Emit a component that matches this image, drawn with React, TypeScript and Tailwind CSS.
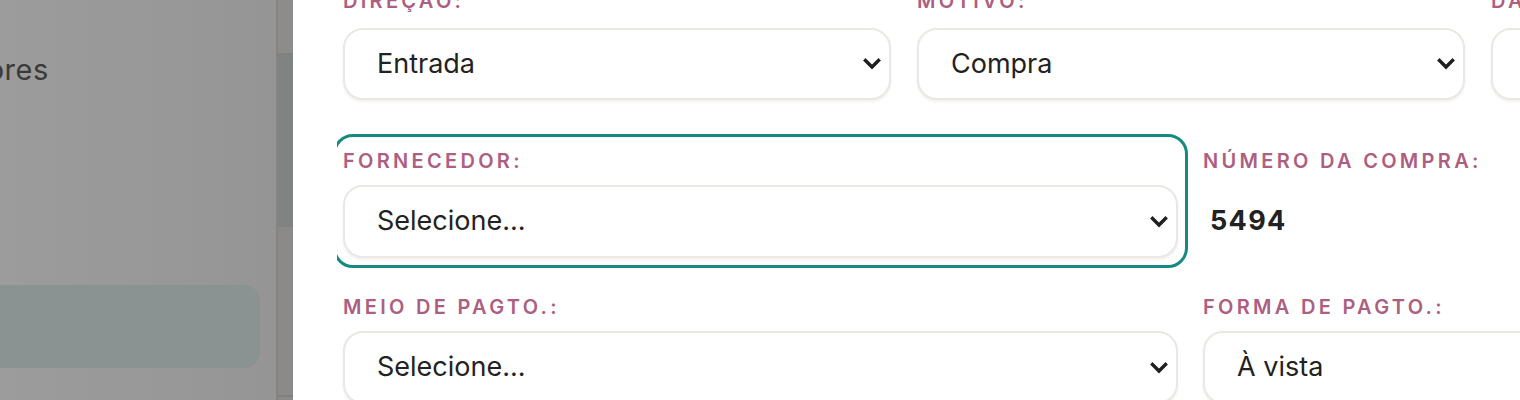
import React from "react";

const font = { fontFamily: "Inter, 'Noto Sans', sans-serif" };

function Chevron() {
  return (
    <svg width="18" height="12" viewBox="0 0 18 12" className="shrink-0">
      <path d="M2.5 2.5 L9 9 L15.5 2.5" fill="none" stroke="#1f1f1f" strokeWidth="3.4" strokeLinecap="square" />
    </svg>
  );
}

function Label({ children }: { children: React.ReactNode }) {
  return (
    <div className="h-[22px] leading-[22px] text-[20px] font-semibold uppercase tracking-[0.165em] text-[#ad5f82] whitespace-nowrap">
      {children}
    </div>
  );
}

function Select({ value, chevron = true, h = "h-[73px]" }: { value: string; chevron?: boolean; h?: string }) {
  return (
    <div
      className={`${h} w-full rounded-[20px] border-2 border-[#ebe7e3] bg-white shadow-[0_2px_3px_rgba(0,0,0,0.06)] flex items-center justify-between pl-[32px] pr-[8px]`}
    >
      <span className="text-[27px] text-[#222222] whitespace-nowrap">{value}</span>
      {chevron && <Chevron />}
    </div>
  );
}

export default function App() {
  return (
    <div className="w-[1520px] h-[400px] overflow-hidden flex bg-white" style={font}>
      {/* Backdrop / page behind */}
      <div className="w-[293px] h-full shrink-0 flex">
        <div className="w-[276px] h-full bg-gradient-to-r from-[#9c9c9c] to-[#959595] flex flex-col">
          <div className="mt-[52px] w-[49px] h-[36px] overflow-hidden flex justify-end items-center">
            <span className="text-[29px] tracking-[0.02em] text-[#3b3a38] whitespace-nowrap">Fornecedores</span>
          </div>
          <div className="mt-[197px] w-[260px] h-[83px] rounded-r-[16px] bg-[#8a9391]" />
        </div>
        <div className="w-[2px] h-full bg-[#858483]" />
        <div className="w-[15px] h-full flex flex-col">
          <div className="h-[53px] bg-[#8e8c8a]" />
          <div className="h-[2px] bg-[#82807e]" />
          <div className="h-[172px] bg-[#7f8482]" />
          <div className="h-[168px] bg-[#8c8a88]" />
          <div className="h-[2px] bg-[#82807e]" />
          <div className="flex-1 bg-[#8c8a88]" />
        </div>
      </div>

      {/* Modal */}
      <div className="flex-1 h-full bg-white pl-[44px] overflow-hidden">
        <div className="h-full overflow-hidden">
          <div className="w-[1710px] pl-[6px]">
            {/* Row 1 */}
            <div className="-mt-[10px] grid grid-cols-[548px_548px_548px] gap-x-[26px]">
              <div>
                <Label>Direção:</Label>
                <div className="mt-[16px]">
                  <Select value="Entrada" h="h-[72px]" />
                </div>
              </div>
              <div>
                <Label>Motivo:</Label>
                <div className="mt-[16px]">
                  <Select value="Compra" h="h-[72px]" />
                </div>
              </div>
              <div>
                <Label>Data:</Label>
                <div className="mt-[16px]">
                  <div className="h-[72px] w-full rounded-[20px] border-2 border-[#ebe7e3] bg-white shadow-[0_2px_3px_rgba(0,0,0,0.06)] flex items-center pl-[27px]">
                    <span className="text-[27px] text-[#222222]">22/10/2024</span>
                  </div>
                </div>
              </div>
            </div>

            {/* Row 2 */}
            <div className="mt-[34px] grid grid-cols-[835px_835px] gap-x-[25px]">
              <div className="-mx-[10px] rounded-[20px] border-[3px] border-[#168a80] pt-[12.5px] pb-[7px] px-[7px]">
                <Label>Fornecedor:</Label>
                <div className="mt-[13.5px]">
                  <Select value="Selecione..." />
                </div>
              </div>
              <div className="pt-[15.5px]">
                <Label>Número da compra:</Label>
                <div className="mt-[13.5px] h-[73px] flex items-center pl-[7px]">
                  <span className="text-[27px] font-bold tracking-[0.05em] text-[#222222]">5494</span>
                </div>
              </div>
            </div>

            {/* Row 3 */}
            <div className="mt-[27.5px] grid grid-cols-[835px_835px] gap-x-[25px]">
              <div>
                <Label>Meio de pagto.:</Label>
                <div className="mt-[13.5px]">
                  <Select value="Selecione..." />
                </div>
              </div>
              <div>
                <Label>Forma de pagto.:</Label>
                <div className="mt-[13.5px]">
                  <Select value="À vista" />
                </div>
              </div>
            </div>
          </div>
        </div>
      </div>
    </div>
  );
}
